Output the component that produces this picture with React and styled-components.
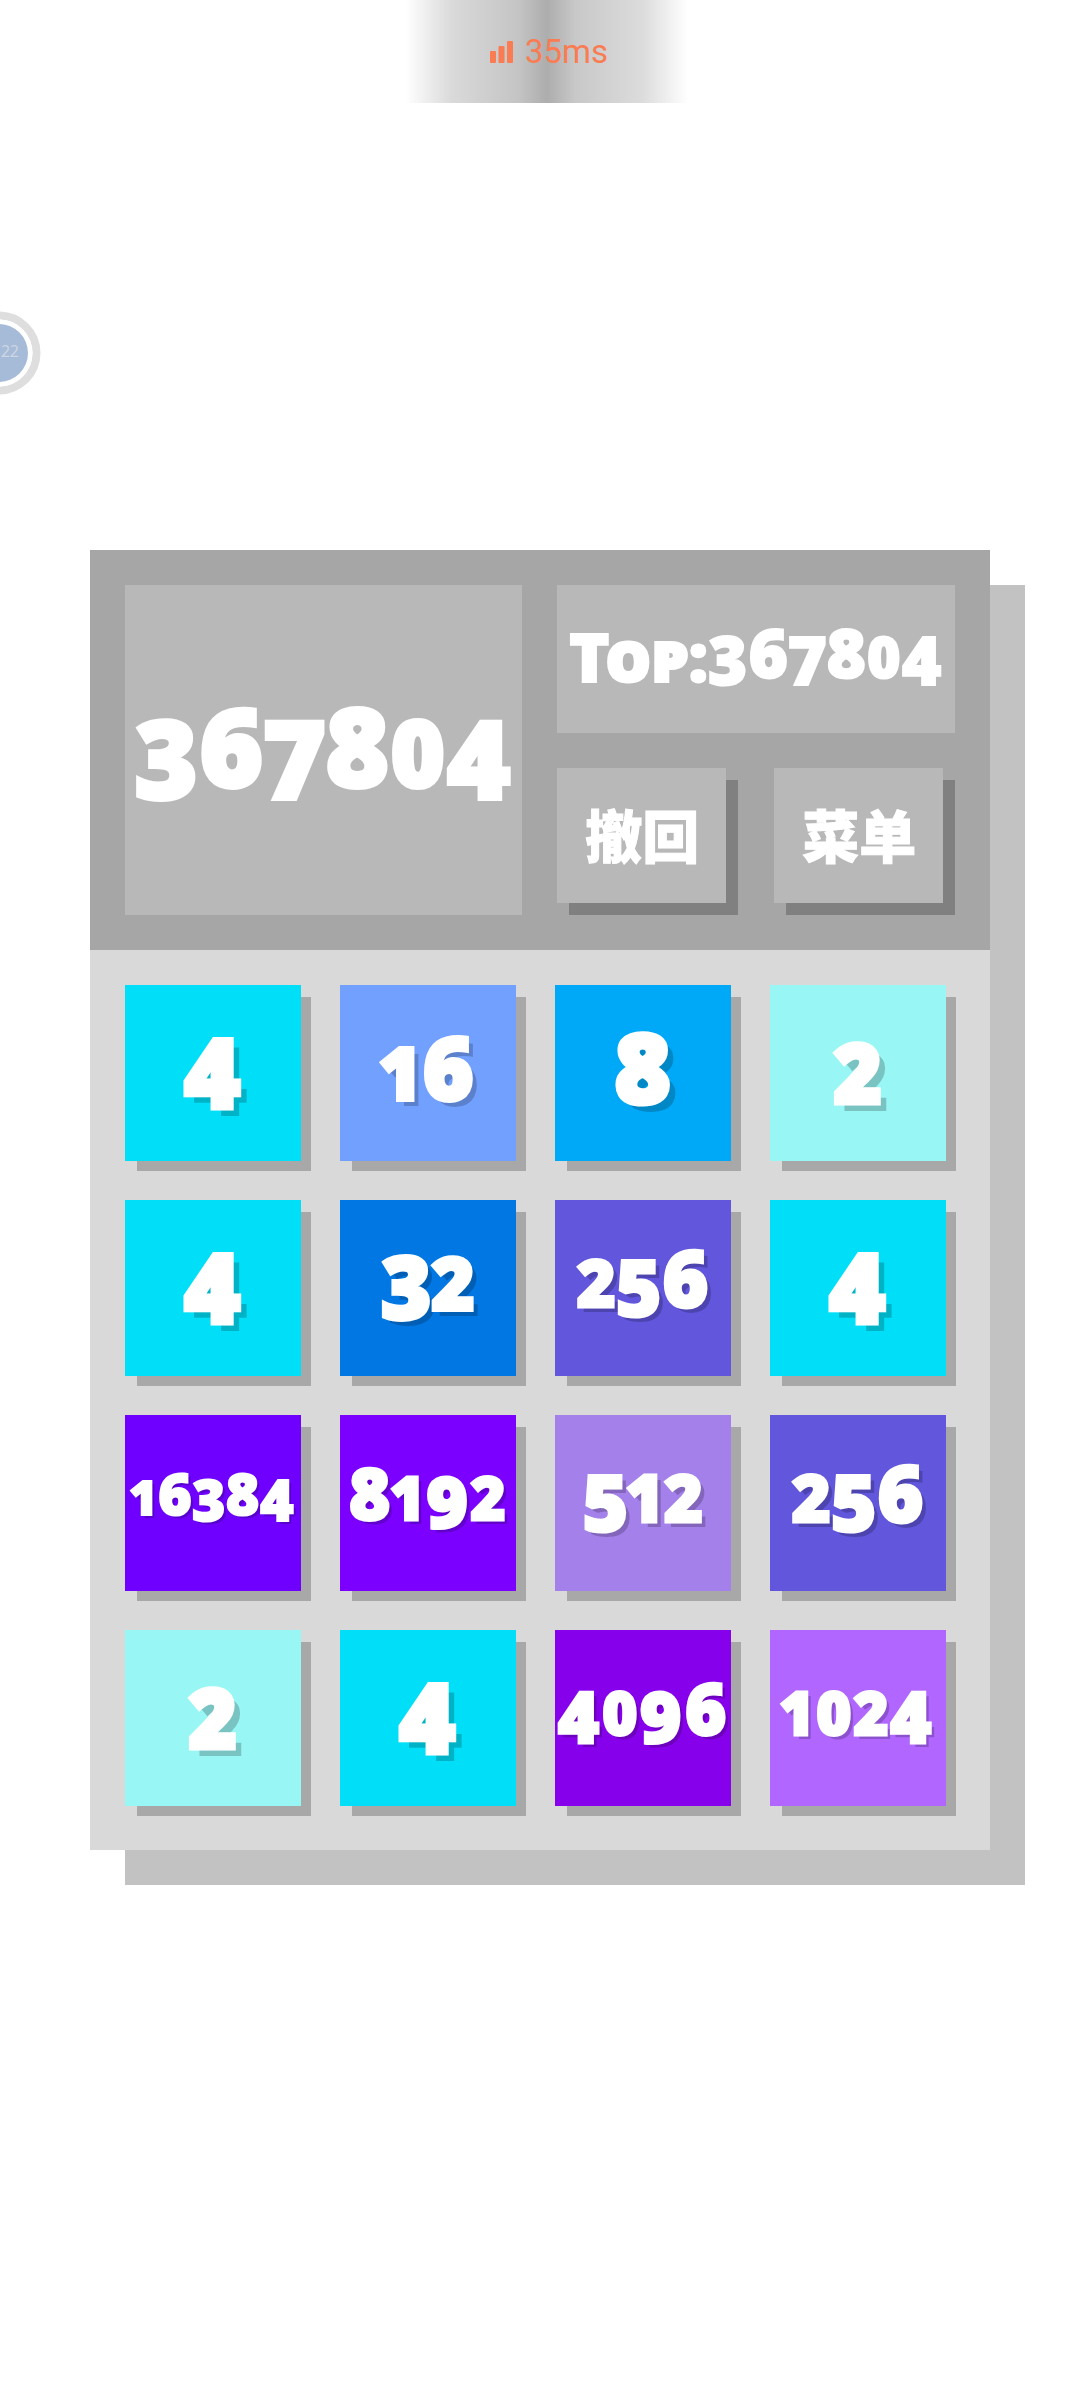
import React from 'react';
import styled, { createGlobalStyle } from 'styled-components';

const Global = createGlobalStyle`
  html, body { margin: 0; padding: 0; background: #fff; }
  #root { width: 1080px; height: 2400px; overflow: hidden; position: relative; }
`;

const fat = `
  font-family: "Noto Sans", "Noto Sans CJK SC", sans-serif;
  font-weight: 900;
  font-variant-numeric: lining-nums proportional-nums;
  color: #fff;
  -webkit-text-stroke-color: #fff;
  stroke-linejoin: round;
`;

const StatusBar = styled.div`
  box-sizing: border-box;
  width: 282px;
  height: 103px;
  margin-left: 406px;
  padding: 0 0 0 84px;
  display: flex;
  align-items: center;
  gap: 12px;
  background: linear-gradient(90deg, #fff 0%, #dadada 16%, #c4c4c4 40%, #adadad 50%, #c8c8c8 60%, #dcdcdc 84%, #fff 100%);
`;

const Ping = styled.span`
  font-family: Roboto, "Noto Sans", sans-serif;
  font-weight: 400;
  font-size: 33px;
  line-height: 1;
  color: #f97c52;
`;

const Bubble = styled.div`
  position: absolute;
  left: -43px;
  top: 311px;
  width: 84px;
  height: 84px;
`;

const BubbleText = styled.span`
  position: absolute;
  left: 44px;
  top: 30px;
  font-family: "Noto Sans", sans-serif;
  font-size: 16px;
  line-height: 20px;
  letter-spacing: -0.5px;
  color: #cdd6e3;
`;

const Board = styled.div`
  width: 900px;
  margin: 447px 0 0 90px;
  box-shadow: 35px 35px 0 #c2c2c2;
`;

const Header = styled.div`
  box-sizing: border-box;
  height: 400px;
  padding: 35px;
  display: grid;
  grid-template-columns: 396.5px 398.5px;
  column-gap: 35px;
  background: #a6a6a6;
`;

const ScoreBox = styled.div`
  ${fat}
  background: #b8b8b8;
  display: flex;
  align-items: center;
  justify-content: center;
  padding-top: 3px;
  box-sizing: border-box;
  font-size: 108px;
  line-height: 1;
  -webkit-text-stroke-width: 4px;
`;

const Side = styled.div`
  display: flex;
  flex-direction: column;
  gap: 35px;
`;

const TopBox = styled.div`
  ${fat}
  box-sizing: border-box;
  height: 148px;
  padding-bottom: 6px;
  background: #b8b8b8;
  display: flex;
  align-items: center;
  justify-content: center;
  font-size: 67px;
  line-height: 1;
  -webkit-text-stroke-width: 2px;
`;

const TopLabel = styled.span`
  font-variant-caps: small-caps;
  font-size: 68px;
`;

const Buttons = styled.div`
  display: flex;
  justify-content: space-between;
  padding-right: 12px;
`;

const Btn = styled.div`
  ${fat}
  box-sizing: border-box;
  width: 169.5px;
  height: 135px;
  padding: 0 0 4px 2px;
  background: #b8b8b8;
  box-shadow: 12px 12px 0 #808080;
  display: flex;
  align-items: center;
  justify-content: center;
  font-family: "Noto Sans CJK SC", sans-serif;
  font-size: 57px;
  line-height: 1;
  -webkit-text-stroke-width: 1px;
`;

const Grid = styled.div`
  box-sizing: border-box;
  height: 900px;
  padding: 35px;
  display: grid;
  grid-template-columns: repeat(4, 175.5px);
  grid-auto-rows: 175.5px;
  gap: 39.5px;
  background: #d9d9d9;
`;

const Tile = styled.div`
  ${fat}
  box-sizing: border-box;
  padding-bottom: 12px;
  background: ${p => p.$bg};
  box-shadow: 11px 11px 0 -1px #a8a8a8;
  display: flex;
  align-items: center;
  justify-content: center;
  font-size: ${p => p.$size}px;
  line-height: 1;
  -webkit-text-stroke-width: ${p => p.$stroke}px;
  text-shadow: ${p => p.$drop}px ${p => p.$drop}px 0 rgba(0, 0, 0, 0.2);
`;

const Num = styled.span`
  white-space: nowrap;
  letter-spacing: ${p => p.$track || 0}em;
`;

const Glyph = styled.span`
  font-size: ${p => (p.$low ? '0.85em' : '1em')};
  vertical-align: ${p => (p.$drop ? '-0.11em' : 'baseline')};
`;

function Number({ value, track }) {
  return (
    <Num $track={track}>
      {String(value).split('').map((c, i) => (
        <Glyph key={i} $low={'012'.includes(c)} $drop={'34579'.includes(c)}>{c}</Glyph>
      ))}
    </Num>
  );
}

const COLORS = {
  2: '#98f6f4', 4: '#00dff7', 8: '#00a9f7', 16: '#72a0ff', 32: '#0077e3',
  256: '#6156dc', 512: '#a480ea', 1024: '#b066ff', 4096: '#8700ec', 8192: '#7b00ff', 16384: '#6f00ff',
};

const STYLE = {
  1: { size: 95, stroke: 5, drop: 8 },
  2: { size: 86, stroke: 4, drop: 6 },
  3: { size: 78, stroke: 3, drop: 5 },
  4: { size: 70, stroke: 3, drop: 4 },
  5: { size: 57, stroke: 2, drop: 3 },
};

const BOARD = [4, 16, 8, 2, 4, 32, 256, 4, 16384, 8192, 512, 256, 2, 4, 4096, 1024];

export default function App() {
  return (
    <>
      <Global />
      <StatusBar>
        <svg width="23" height="22" viewBox="0 0 23 22">
          <rect x="0" y="10" width="6" height="12" rx="1" fill="#f97c52" />
          <rect x="8.5" y="5" width="6" height="17" rx="1" fill="#f97c52" />
          <rect x="17" y="0" width="6" height="22" rx="1" fill="#f97c52" />
        </svg>
        <Ping>35ms</Ping>
      </StatusBar>
      <Bubble>
        <svg width="84" height="84" viewBox="0 0 84 84">
          <circle cx="42" cy="42" r="37.5" fill="none" stroke="#dedede" strokeWidth="8" />
          <circle cx="42" cy="42" r="33.5" fill="#fff" />
          <circle cx="42" cy="42" r="29" fill="#a5bbd8" />
        </svg>
        <BubbleText>22</BubbleText>
      </Bubble>
      <Board>
        <Header>
          <ScoreBox><Number value="367804" /></ScoreBox>
          <Side>
            <TopBox>
              <TopLabel>Top:</TopLabel>
              <Number value="367804" />
            </TopBox>
            <Buttons>
              <Btn>撤回</Btn>
              <Btn>菜单</Btn>
            </Buttons>
          </Side>
        </Header>
        <Grid>
          {BOARD.map((v, i) => {
            const n = String(v).length;
            const s = STYLE[n];
            return (
              <Tile key={i} $bg={COLORS[v]} $size={s.size} $stroke={s.stroke} $drop={s.drop}>
                <Number value={v} track={n === 4 ? 0.02 : 0} />
              </Tile>
            );
          })}
        </Grid>
      </Board>
    </>
  );
}
